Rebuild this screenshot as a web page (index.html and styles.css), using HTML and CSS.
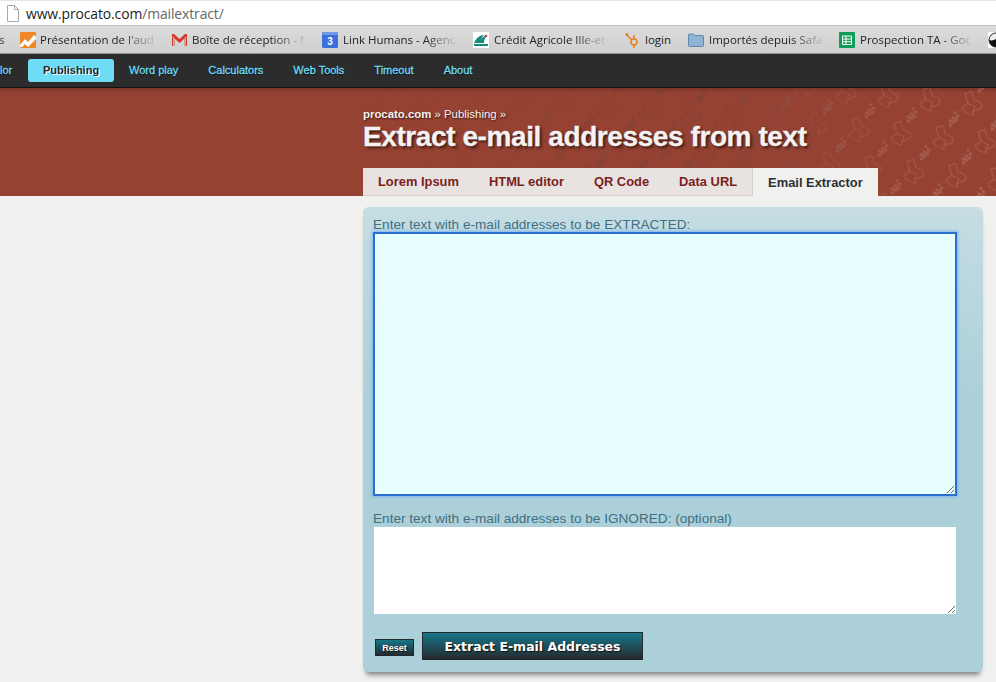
FILE: index.html
```html
<!DOCTYPE html>
<html lang="en">
<head>
<meta charset="utf-8">
<title>Extract e-mail addresses from text</title>
<link rel="stylesheet" href="styles.css">
</head>
<body>
<header class="address-bar">
  <svg class="page-icon" width="14" height="17" viewBox="0 0 14 17"><path d="M1.5 .5h7l4 4v12h-11z M8.5 .5v4h4" fill="#fff" stroke="#a8a8a8"/></svg>
  <div class="url">www.procato.com<span class="url-path">/mailextract/</span></div>
</header>
<div class="bookmarks">
  <span class="bm-cut">s</span>
  <div class="bm bm-w1">
    <svg width="16" height="16" viewBox="0 0 16 16"><rect width="16" height="16" rx="1" fill="#f0862a"/><path d="M0 13l5-6 3 3 6-7 2 2v2l-8 8-3-3-3 3H0z" fill="#fff"/></svg>
    <span class="bm-text">Présentation de l'aud</span>
  </div>
  <div class="bm bm-w2">
    <svg width="15" height="12" viewBox="0 0 15 12"><path d="M0 0h2l5.500 5L13 0h2v12h-2.600V4.500L7.500 9 2.600 4.500V12H0z" fill="#d0392b"/><path d="M2.600 4.500V12H1V2z M12.400 4.500V12H14V2z" fill="#b9b1ab"/></svg>
    <span class="bm-text">Boîte de réception - f</span>
  </div>
  <div class="bm bm-w3">
    <svg width="16" height="16" viewBox="0 0 16 16"><rect width="16" height="16" rx="1.500" fill="#3a6fdc"/><rect y="0" width="16" height="3" fill="#6f98e8"/><text x="8" y="13" class="cal-num" text-anchor="middle">3</text></svg>
    <span class="bm-text">Link Humans - Agenc</span>
  </div>
  <div class="bm bm-w4">
    <svg width="16" height="16" viewBox="0 0 16 16"><rect width="16" height="16" fill="#fff"/><path d="M1 11c2-5 6-8 10-8-2 2-4 5-4 8z M7 11c0-3 2-6 7-8-2 3-3 5-3 8z" fill="#17897f"/><rect x="1" y="12" width="14" height="2" fill="#17897f"/><circle cx="13" cy="4" r="1.300" fill="#d5322d"/></svg>
    <span class="bm-text">Crédit Agricole Ille-et</span>
  </div>
  <div class="bm bm-w5">
    <svg width="16" height="16" viewBox="0 0 16 16"><g fill="none" stroke="#e8801f" stroke-width="1.500"><circle cx="9" cy="10" r="3"/><path d="M9 7V3M6.800 8 2 3M9 13v3"/></g><circle cx="1.800" cy="2.500" r="1.400" fill="#e8801f"/></svg>
    <span class="bm-label">login</span>
  </div>
  <div class="bm bm-w6">
    <svg width="16" height="14" viewBox="0 0 16 14"><path d="M.5 2q0-1 1-1h4l1.500 1.500h7.500q1 0 1 1v9q0 1-1 1h-13q-1 0-1-1z" fill="#8fb3d3" stroke="#5f87a8"/></svg>
    <span class="bm-text">Importés depuis Safa</span>
  </div>
  <div class="bm bm-w7">
    <svg width="16" height="16" viewBox="0 0 16 16"><rect width="16" height="16" rx="1" fill="#0f9d58"/><path d="M3.500 4h9v8.500h-9z M3.500 7h9 M3.500 9.700h9 M7 4v8.500" fill="none" stroke="#fff"/></svg>
    <span class="bm-text">Prospection TA - Goc</span>
  </div>
  <svg class="bm-end" width="16" height="16" viewBox="0 0 16 16"><rect width="16" height="16" fill="#fff"/><circle cx="8" cy="8" r="7" fill="#eee" stroke="#222"/><path d="M1 8a7 7 0 0 0 14 0c-3 2-5-2-7-1s-4 2-7 1z" fill="#111"/></svg>
</div>
<nav class="nav">
  <a class="nav-link nav-cut">lor</a>
  <a class="nav-active">Publishing</a>
  <a class="nav-link">Word play</a>
  <a class="nav-link">Calculators</a>
  <a class="nav-link">Web Tools</a>
  <a class="nav-link">Timeout</a>
  <a class="nav-link">About</a>
</nav>
<section class="hero">
  <svg class="hero-pattern pattern-dark" width="996" height="108">
    <defs>
      <g id="motif" fill="none" stroke="currentColor" stroke-width=".7">
        <path d="M3 2l7-2 2 8 8 4-1 5-8 3v4l-9-4-2-4 6-4z M6 12l7 3-2 5"/>
        <g fill="currentColor" stroke="none" opacity=".8">
          <rect x="29" y="36" width="3" height="3"/><rect x="32" y="33" width="3" height="3"/><rect x="29" y="32" width="3" height="3"/>
          <rect x="35" y="31" width="3" height="3"/><rect x="32" y="29" width="3" height="3"/><rect x="36" y="27" width="3" height="3"/>
          <circle cx="35" cy="25" r="1.500"/>
        </g>
      </g>
      <g id="tile">
        <g transform="matrix(1.034 -.103 -.354 1.088 0 0)">
          <use href="#motif"/>
          <use href="#motif" x="-42" y="-4"/>
          <use href="#motif" x="42" y="4"/>
          <use href="#motif" x="-13" y="-38"/>
          <use href="#motif" x="13" y="38"/>
          <use href="#motif" x="-55" y="-42"/>
          <use href="#motif" x="-29" y="34"/>
          <use href="#motif" x="29" y="-34"/>
        </g>
      </g>
      <pattern id="shapes-dark" class="pattern-ink-dark" width="42" height="40" patternUnits="userSpaceOnUse" patternTransform="matrix(1 .095 .325 .95 920 -.5)">
        <use href="#tile"/>
      </pattern>
      <pattern id="shapes-light" class="pattern-ink-light" width="42" height="40" patternUnits="userSpaceOnUse" patternTransform="matrix(1 .095 .325 .95 920 -.5)">
        <use href="#tile"/>
      </pattern>
    </defs>
    <rect width="996" height="108" fill="url(#shapes-dark)"/>
  </svg>
  <svg class="hero-pattern pattern-light" width="996" height="108">
    <rect width="996" height="108" fill="url(#shapes-light)"/>
  </svg>
  <div class="hero-inner">
    <div class="crumbs"><b>procato.com</b> » Publishing »</div>
    <h1 class="title">Extract e-mail addresses from text</h1>
    <div class="tabs">
      <a class="tab">Lorem Ipsum</a>
      <a class="tab">HTML editor</a>
      <a class="tab">QR Code</a>
      <a class="tab">Data URL</a>
      <a class="tab tab-active">Email Extractor</a>
    </div>
  </div>
</section>
<main class="main">
  <form class="panel">
    <label class="field-label">Enter text with e-mail addresses to be EXTRACTED:</label>
    <textarea class="area area-focus"></textarea>
    <label class="field-label label-second">Enter text with e-mail addresses to be IGNORED: (optional)</label>
    <textarea class="area area-plain"></textarea>
    <div class="actions">
      <button type="button" class="btn btn-small">Reset</button>
      <button type="button" class="btn btn-big">Extract E-mail Addresses</button>
    </div>
  </form>
</main>
</body>
</html>
```
FILE: styles.css
```css
* { box-sizing: border-box; }
html, body { margin: 0; height: 682px; overflow: hidden; }
body { background: #f0f0ee; font-family: "Liberation Sans", Arial, sans-serif; width: 996px; }

.address-bar {
  height: 26px;
  background: #fff;
  border-top: 1px solid #e4e4e4;
  border-bottom: 1px solid #bdbdbd;
  display: flex;
  align-items: center;
  padding-left: 6px;
  gap: 6px;
}
.page-icon { flex: none; }
.url { font-family: "Open Sans", sans-serif; font-size: 13.900px; color: #1c1c1c; letter-spacing: -.1px; }
.url-path { color: #666; }

.bookmarks {
  height: 28px;
  background: linear-gradient(#dcdcdc, #cfcfcf);
  border-bottom: 1px solid #8f8f8f;
  display: flex;
  align-items: center;
  overflow: hidden;
  font-family: "Open Sans", sans-serif;
  font-size: 11.500px;
  color: #222;
  white-space: nowrap;
}
.bm-cut { width: 21px; flex: none; margin-left: -1px; color: #444; }
.bm { display: flex; align-items: center; gap: 5px; flex: none; height: 100%; }
.bm svg { flex: none; }
.bm-text {
  display: block;
  -webkit-mask-image: linear-gradient(90deg, #000 72%, rgba(0,0,0,.12) 100%);
  mask-image: linear-gradient(90deg, #000 72%, rgba(0,0,0,.12) 100%);
}
.bm-w1 { width: 152px; gap: 4px; }
.bm-w2 { width: 150px; gap: 5px; }
.bm-w3 { width: 151px; }
.bm-w4 { width: 152px; }
.bm-w5 { width: 63px; gap: 4px; }
.bm-w6 { width: 151px; }
.bm-w7 { width: 150px; }
.cal-num { font: bold 10px "Liberation Sans", sans-serif; fill: #fff; }
.bm-end { flex: none; margin-left: -1px; }

.nav {
  height: 34px;
  background: #2c2c2c;
  border-bottom: 1px solid #111;
  display: flex;
  align-items: center;
  font-size: 11px;
  font-weight: bold;
  padding-bottom: 1px;
}
.nav a { display: block; white-space: nowrap; }
.nav-active {
  width: 86px;
  height: 23px;
  line-height: 23px;
  text-align: center;
  background: #6fdcf5;
  border-radius: 3px;
  color: #1f2a2e;
  text-shadow: 1px 1px 0 #fff;
}
.nav-link { padding: 0 15px; color: #6fdcf5; font-weight: normal; text-shadow: 0 1px 1px #000; -webkit-text-stroke: .3px #6fdcf5; }
.nav a.nav-cut { width: 28px; padding: 0; }

.hero {
  position: relative;
  height: 108px;
  background: linear-gradient(#7d3426 0, #964232 5px, #964232 100%);
  overflow: hidden;
}
.hero-pattern { position: absolute; left: 0; top: 0; }
.pattern-ink-dark { color: #5f4238; }
.pattern-ink-light { color: #c9a598; }
.pattern-dark {
  -webkit-mask-image: linear-gradient(90deg, transparent 36%, rgba(0,0,0,.22) 50%, rgba(0,0,0,.5) 68%, rgba(0,0,0,.4) 78%, transparent 88%);
  mask-image: linear-gradient(90deg, transparent 36%, rgba(0,0,0,.22) 50%, rgba(0,0,0,.5) 68%, rgba(0,0,0,.4) 78%, transparent 88%);
}
.pattern-light {
  -webkit-mask-image: linear-gradient(90deg, transparent 72%, rgba(0,0,0,.25) 84%, rgba(0,0,0,.42) 100%);
  mask-image: linear-gradient(90deg, transparent 72%, rgba(0,0,0,.25) 84%, rgba(0,0,0,.42) 100%);
}
.hero-inner {
  position: relative;
  margin-left: 363px;
  height: 108px;
  display: flex;
  flex-direction: column;
}
.crumbs {
  margin-top: 19px;
  font-size: 11.400px;
  line-height: 14px;
  color: #f5f2f0;
  text-shadow: 1px 1px 2px #3a1a12;
}
.crumbs b { font-weight: bold; }
.title {
  margin: 1px 0 0;
  font-size: 28px;
  line-height: 30px;
  font-weight: bold;
  color: #f4f2f2;
  letter-spacing: -.41px;
  text-shadow: 2px 2px 3px #3a1a12;
  -webkit-text-stroke: .3px #f4f2f2;
}
.tabs { display: flex; margin-top: auto; height: 28px; }
.tab {
  display: block;
  height: 28px;
  line-height: 27px;
  padding: 0 15px;
  font-size: 12.900px;
  font-weight: bold;
  color: #7b1f1c;
  background: #e8e3e1;
  border-bottom: 1px solid #d6d1cf;
  white-space: nowrap;
}
.tab-active {
  background: #f0f0ee;
  color: #2b3035;
  line-height: 29px;
  border-left: 1px solid #d6d1cf;
  border-bottom: 0;
}

.main { padding: 11px 13px 0 363px; }
.panel {
  width: 620px;
  height: 465px;
  background: #acd0d9;
  border-radius: 6px;
  box-shadow: 0 6px 5px -3px rgba(0,0,0,.45);
  padding: 9px 0 0 10px;
  background-image: linear-gradient(#c5dde3, #acd0d9 190px);
}
.field-label {
  display: block;
  font-size: 13.600px;
  line-height: 16px;
  padding-top: 1px;
  height: 16px;
  color: #3f6f82;
}
.label-second { margin-top: 15px; padding-top: 0; }
.area {
  display: block;
  border: 0;
  outline: 0;
  padding: 2px;
  border-radius: 0;
  resize: both;
}
.area-focus {
  width: 584px;
  height: 264px;
  background: #e8ffff;
  border: 2px solid #2a6fcf;
  box-shadow: 0 0 3px 1px #7fb6ea;
}
.area-plain { width: 582px; height: 87px; margin-left: 1px; background: #fff; }
.actions { display: flex; align-items: center; gap: 8px; margin: 18px 0 0 2px; }
.btn {
  display: block;
  border: 1px solid #20282c;
  background: linear-gradient(#16778a, #252a2e);
  color: #fff;
  font-family: "Liberation Sans", Arial, sans-serif;
  font-weight: bold;
  padding: 0;
  border-radius: 0;
  text-shadow: 1px 1px 1px #111;
}
.btn-small { width: 39px; height: 17px; font-size: 9px; margin-top: 3px; }
.btn-big { width: 221px; height: 28px; font-family: "DejaVu Sans", sans-serif; font-size: 12.500px; }
```
